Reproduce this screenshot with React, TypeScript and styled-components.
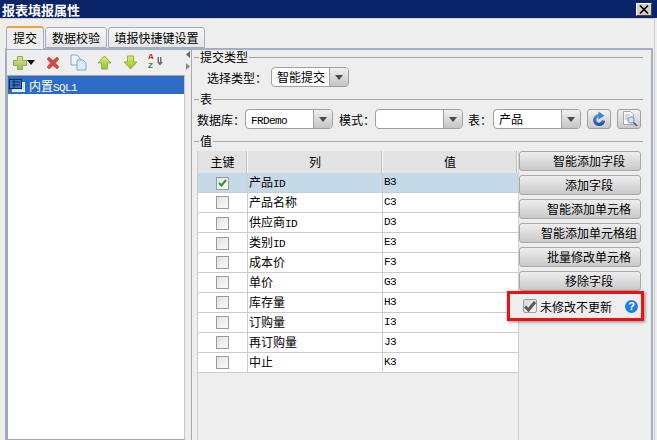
import styled, { createGlobalStyle } from 'styled-components';

const GlobalStyle = createGlobalStyle`
  html, body {
    margin: 0;
    padding: 0;
    background: #eeeeee;
  }
  * {
    box-sizing: border-box;
  }
`;

const Dialog = styled.div`
  position: relative;
  width: 657px;
  height: 440px;
  overflow: hidden;
  background: #eeeeee;
  color: #000;
  font-family: "Noto Sans CJK SC", "Liberation Sans", sans-serif;
  font-size: 12px;
  display: flex;
  flex-direction: column;
`;
const TitleBar = styled.div`
  height: 18px;
  flex: none;
  background: #0a246a;
  color: #fff;
  font-weight: 700;
  font-size: 13px;
  line-height: 17px;
  padding: 0 5px 0 2px;
  display: flex;
  align-items: center;
  justify-content: space-between;
`;
const CloseButton = styled.div`
  width: 16px;
  height: 13px;
  background: #d4d0c8;
  border: 1px solid;
  border-color: #fff #404040 #404040 #fff;
  display: flex;
  align-items: center;
  justify-content: center;
`;
const Body = styled.div`
  flex: 1;
  min-height: 0;
  width: 655px;
  border-top: 1px solid #d4d0c8;
  border-right: 1px solid #d4d0c8;
  display: flex;
  flex-direction: column;
`;
const Tabs = styled.div`
  height: 29px;
  flex: none;
  padding: 6px 0 0 6px;
  display: flex;
  align-items: flex-end;
  gap: 1px;
`;
const Tab = styled.div<{ $active?: boolean; $w: number }>`
  width: ${(p) => p.$w}px;
  height: ${(p) => (p.$active ? 23 : 21)}px;
  margin-bottom: ${(p) => (p.$active ? -1 : 0)}px;
  position: relative;
  z-index: ${(p) => (p.$active ? 1 : 0)};
  background: ${(p) => (p.$active ? '#eeeeee' : 'linear-gradient(#f6f6f6, #e6e6e6)')};
  border: 1px solid #a0afc3;
  border-bottom: ${(p) => (p.$active ? 'none' : '1px solid #a0afc3')};
  border-top: ${(p) => (p.$active ? '2px solid #e8a33d' : '1px solid #a0afc3')};
  border-radius: 3px 3px 0 0;
  text-align: center;
  line-height: 20px;
  white-space: nowrap;
`;
const Panel = styled.div`
  flex: 1;
  min-height: 0;
  margin: 0 1px 0 5px;
  border: 2px solid #a0afc3;
  border-bottom: none;
  display: flex;
`;
const LeftPane = styled.div`
  width: 178px;
  flex: none;
  display: flex;
  flex-direction: column;
`;
const Toolbar = styled.div`
  height: 25px;
  flex: none;
  display: flex;
  align-items: center;
  padding: 0 0 0 6px;
`;
const ToolIcon = styled.svg<{ $gap?: number }>`
  display: block;
  flex: none;
  margin-right: ${(p) => p.$gap ?? 0}px;
`;
const SortIcon = styled(ToolIcon)`
  margin-bottom: 3px;
`;
const TreeList = styled.div`
  flex: 1;
  background: #fff;
  border: 1px solid #a5a5a0;
  border-right-color: #c8c8c0;
`;
const TreeRow = styled.div`
  height: 18px;
  background: #2d6cc6;
  color: #fff;
  display: flex;
  align-items: center;
  gap: 4px;
  padding-left: 1px;
`;
const LatinText = styled.span`
  font-family: "Liberation Mono", monospace;
  font-size: 11px;
  letter-spacing: -0.6px;
`;
const Splitter = styled.div`
  width: 7px;
  flex: none;
  border-right: 1px solid #a8a8a8;
  display: flex;
  flex-direction: column;
  align-items: center;
  gap: 5px;
  padding-top: 1px;
`;
const SplitArrow = styled.svg`
  display: block;
`;
const RightPane = styled.div`
  flex: 1;
  min-width: 0;
  display: flex;
  flex-direction: column;
  padding: 0 8px 0 2px;
`;
const Legend = styled.div<{ $mt?: number }>`
  height: 14px;
  margin-top: ${(p) => p.$mt ?? 0}px;
  flex: none;
  display: flex;
  align-items: center;
  gap: 1px;
  line-height: 14px;
  &::before {
    content: "";
    width: 5px;
    height: 1px;
    background: #a8a8a0;
  }
  &::after {
    content: "";
    flex: 1;
    height: 1px;
    background: #a8a8a0;
  }
`;
const FormRow = styled.div<{ $mt?: number; $pl?: number }>`
  height: 20px;
  flex: none;
  margin-top: ${(p) => p.$mt ?? 0}px;
  padding-left: ${(p) => p.$pl ?? 0}px;
  display: flex;
  align-items: center;
`;
const FormLabel = styled.span<{ $w: number; $pl?: number }>`
  width: ${(p) => p.$w}px;
  padding-left: ${(p) => p.$pl ?? 0}px;
  flex: none;
  white-space: nowrap;
`;
const Combo = styled.div<{ $w: number }>`
  width: ${(p) => p.$w}px;
  height: 20px;
  flex: none;
  display: flex;
  border: 1px solid #a0a0a0;
  border-radius: 4px;
  overflow: hidden;
  background: #fff;
`;
const ComboText = styled.div`
  flex: 1;
  min-width: 0;
  padding-left: 5px;
  line-height: 18px;
  white-space: nowrap;
  overflow: hidden;
`;
const ComboArrow = styled.div`
  width: 19px;
  flex: none;
  border-left: 1px solid #a0a0a0;
  background: linear-gradient(#f0f0f0, #c4c4c4);
  display: flex;
  align-items: center;
  justify-content: center;
  &::before {
    content: "";
    border-left: 4px solid transparent;
    border-right: 4px solid transparent;
    border-top: 5px solid #4a4a4a;
  }
`;
const IconButton = styled.div<{ $ml: number }>`
  width: 24px;
  height: 20px;
  flex: none;
  margin-left: ${(p) => p.$ml}px;
  border: 1px solid #a0a0a0;
  border-radius: 3px;
  background: linear-gradient(#f2f2f2, #c8c8c8);
  display: flex;
  align-items: center;
  justify-content: center;
`;
const ValueArea = styled.div`
  flex: 1;
  min-height: 0;
  margin-top: 3px;
  display: flex;
`;
const TableBox = styled.div`
  width: 322px;
  flex: none;
  margin-left: 3px;
  border: solid #cfcfcf;
  border-width: 0 1px 0 1px;
`;
const HeaderRow = styled.div`
  height: 22px;
  display: grid;
  grid-template-columns: 50px 135px 1fr;
  background: #e3e3e3;
`;
const HeaderCell = styled.div`
  display: flex;
  align-items: center;
  justify-content: center;
  line-height: 20px;
  border-right: 1px solid #f8f8f8;
  box-shadow: inset -1px 0 0 #c0c0c0;
`;
const DataRow = styled.div<{ $selected?: boolean }>`
  height: 20px;
  display: grid;
  grid-template-columns: 50px 135px 1fr;
  background: ${(p) => (p.$selected ? '#c6d9e8' : '#fff')};
  border-bottom: 1px solid #cccccc;
`;
const CheckCell = styled.div`
  display: flex;
  align-items: center;
  justify-content: center;
  border-right: 1px solid #cccccc;
`;
const Checkbox = styled.div`
  width: 13px;
  height: 13px;
  border: 1px solid #9a9a9a;
  background: linear-gradient(135deg, #e2e2e2, #fbfbfb);
  display: flex;
  align-items: center;
  justify-content: center;
`;
const NameCell = styled.div`
  padding-left: 1px;
  line-height: 18px;
  border-right: 1px solid #cccccc;
  white-space: nowrap;
`;
const CodeCell = styled.div`
  padding-left: 1px;
  font-family: "Liberation Mono", monospace;
  font-size: 11px;
  letter-spacing: -0.6px;
  line-height: 19px;
`;
const ActionColumn = styled.div`
  width: 122px;
  flex: none;
  display: flex;
  flex-direction: column;
  gap: 4px;
`;
const ActionButton = styled.div`
  height: 20px;
  flex: none;
  border: 1px solid #a8a8a8;
  border-radius: 3px;
  background: linear-gradient(#eeeeee, #c9c9c9);
  text-align: center;
  line-height: 18px;
  padding-left: 18px;
  white-space: nowrap;
`;
const Annotation = styled.div`
  position: absolute;
  left: 507px;
  top: 291px;
  width: 137px;
  height: 30px;
  border: 3px solid #ee1111;
  box-shadow: 1px 1px 3px rgba(0, 0, 0, 0.45);
  background: #eeeeee;
  display: flex;
  align-items: center;
  padding-left: 13px;
`;
const BigCheck = styled.div`
  width: 14px;
  height: 14px;
  flex: none;
  border: 1px solid #a0a0a0;
  border-radius: 2px;
  background: linear-gradient(135deg, #d8d8d8, #f4f4f4);
  display: flex;
  align-items: center;
  justify-content: center;
`;
const AnnotationText = styled.span`
  margin-left: 3px;
  white-space: nowrap;
`;
const HelpBadge = styled.div`
  width: 13px;
  height: 13px;
  margin-left: 13px;
  flex: none;
  border-radius: 50%;
  background: #1a7fe0;
  color: #fff;
  font-family: "Liberation Sans", sans-serif;
  font-size: 11px;
  font-weight: 700;
  line-height: 13px;
  text-align: center;
`;

const rows = [
  ['产品', 'ID', 'B3'],
  ['产品名称', '', 'C3'],
  ['供应商', 'ID', 'D3'],
  ['类别', 'ID', 'E3'],
  ['成本价', '', 'F3'],
  ['单价', '', 'G3'],
  ['库存量', '', 'H3'],
  ['订购量', '', 'I3'],
  ['再订购量', '', 'J3'],
  ['中止', '', 'K3'],
];

const actions = ['智能添加字段', '添加字段', '智能添加单元格', '智能添加单元格组', '批量修改单元格', '移除字段'];

const App = () => {
  return (
    <Dialog>
      <GlobalStyle />
      <TitleBar>
        报表填报属性
        <CloseButton>
          <svg width="10" height="9" viewBox="0 0 10 9">
            <path d="M1 0.5 L9 8.5 M9 0.5 L1 8.5" stroke="#000" strokeWidth="1.6" />
          </svg>
        </CloseButton>
      </TitleBar>
      <Body>
        <Tabs>
          <Tab $active $w={38}>提交</Tab>
          <Tab $w={62}>数据校验</Tab>
          <Tab $w={97}>填报快捷键设置</Tab>
        </Tabs>
        <Panel>
          <LeftPane>
            <Toolbar>
              <ToolIcon width="14" height="14" viewBox="0 0 14 14">
                <defs>
                  <linearGradient id="plusFill" x1="0" y1="0" x2="0" y2="1">
                    <stop offset="0" stopColor="#d8e89a" />
                    <stop offset="1" stopColor="#9cbf50" />
                  </linearGradient>
                  <linearGradient id="arrowFill" x1="0" y1="0" x2="0" y2="1">
                    <stop offset="0" stopColor="#dcef7a" />
                    <stop offset="1" stopColor="#8fc02c" />
                  </linearGradient>
                  <linearGradient id="refreshFill" x1="0" y1="0" x2="0" y2="1">
                    <stop offset="0" stopColor="#4f92dc" />
                    <stop offset="1" stopColor="#1f56a8" />
                  </linearGradient>
                </defs>
                <path d="M4.5 0.5h5v4h4v5h-4v4h-5v-4h-4v-5h4z" fill="url(#plusFill)" stroke="#8fa858" />
              </ToolIcon>
              <ToolIcon width="8" height="5" viewBox="0 0 8 5" $gap={11}>
                <path d="M0 0h8L4 5z" fill="#111" />
              </ToolIcon>
              <ToolIcon width="14" height="14" viewBox="0 0 14 14" $gap={10}>
                <path d="M1 3l2-2 4 3.5L11 1l2 2-3.5 4L13 11l-2 2-4-3.5L3 13l-2-2 3.5-4z" fill="#d8483f" stroke="#b84a44" strokeWidth="0.6" />
              </ToolIcon>
              <ToolIcon width="17" height="17" viewBox="0 0 17 17" $gap={10}>
                <path d="M1 1h6l3 3v7H1z" fill="#eef5fd" stroke="#7aa7dc" />
                <path d="M7 6h6l3 3v7H7z" fill="#dcebfb" stroke="#7aa7dc" />
              </ToolIcon>
              <ToolIcon width="15" height="15" viewBox="0 0 15 15" $gap={11}>
                <path d="M7.5 1L14 8h-3.5v6h-6V8H1z" fill="url(#arrowFill)" stroke="#93b33c" />
              </ToolIcon>
              <ToolIcon width="15" height="15" viewBox="0 0 15 15" $gap={10}>
                <path d="M7.5 14L14 7h-3.5V1h-6v6H1z" fill="url(#arrowFill)" stroke="#93b33c" />
              </ToolIcon>
              <SortIcon width="16" height="18" viewBox="0 0 16 18">
                <text x="0" y="7.3" fontSize="8" fontWeight="700" fontFamily="Liberation Sans" fill="#c8281e">A</text>
                <text x="0" y="16.2" fontSize="8" fontWeight="700" fontFamily="Liberation Sans" fill="#1f8f30">Z</text>
                <path d="M9.5 5h1.5v5h1V5h1.5v5H15l-3 3.5L9 10h.5z" fill="#6e6e6e" />
              </SortIcon>
            </Toolbar>
            <TreeList>
              <TreeRow>
                <svg width="16" height="13" viewBox="0 0 16 13">
                  <rect x="3.5" y="3.5" width="12" height="9" fill="#cfe0f5" stroke="#f2f6fc" />
                  <rect x="0.5" y="0.5" width="12" height="9" fill="#3d74c4" stroke="#10284f" />
                  <path d="M3 3h8M3 6h8M5 1v8" stroke="#10284f" strokeWidth="1" />
                </svg>
                <span>内置<LatinText>SQL1</LatinText></span>
              </TreeRow>
            </TreeList>
          </LeftPane>
          <Splitter>
            <SplitArrow width="4" height="7" viewBox="0 0 4 7"><path d="M4 0v7L0 3.5z" fill="#666" /></SplitArrow>
            <SplitArrow width="4" height="7" viewBox="0 0 4 7"><path d="M0 0v7l4-3.5z" fill="#888" /></SplitArrow>
          </Splitter>
          <RightPane>
            <Legend>提交类型</Legend>
            <FormRow $mt={3} $pl={13}>
              <FormLabel $w={64}>选择类型：</FormLabel>
              <Combo $w={78}>
                <ComboText>智能提交</ComboText>
                <ComboArrow />
              </Combo>
            </FormRow>
            <Legend $mt={5}>表</Legend>
            <FormRow $mt={3} $pl={3}>
              <FormLabel $w={48}>数据库：</FormLabel>
              <Combo $w={88}>
                <ComboText><LatinText>FRDemo</LatinText></ComboText>
                <ComboArrow />
              </Combo>
              <FormLabel $w={42} $pl={6}>模式：</FormLabel>
              <Combo $w={88}>
                <ComboText />
                <ComboArrow />
              </Combo>
              <FormLabel $w={30} $pl={5}>表：</FormLabel>
              <Combo $w={88}>
                <ComboText>产品</ComboText>
                <ComboArrow />
              </Combo>
              <IconButton $ml={6}>
                <svg width="15" height="16" viewBox="0 0 15 16">
                  <path d="M11.5 9.5A4.4 4.4 0 1 1 7 4.6" fill="none" stroke="url(#refreshFill)" strokeWidth="3.4" />
                  <path d="M6.5 0.5L12.5 4.8 6.5 8.5z" fill="#3f82d4" />
                </svg>
              </IconButton>
              <IconButton $ml={6}>
                <svg width="17" height="16" viewBox="0 0 17 16">
                  <path d="M2.5 0.5h7l3 3v10h-10z" fill="#fbfbfb" stroke="#a8a8a8" />
                  <path d="M4 4h5M4 6h3M4 8h3" stroke="#b0b0b0" />
                  <circle cx="10" cy="9" r="3.2" fill="#cfe3f5" stroke="#6f94bb" />
                  <path d="M12.5 11.5L16 15" stroke="#555" strokeWidth="1.6" />
                </svg>
              </IconButton>
            </FormRow>
            <Legend $mt={5}>值</Legend>
            <ValueArea>
              <TableBox>
                <HeaderRow>
                  <HeaderCell>主键</HeaderCell>
                  <HeaderCell>列</HeaderCell>
                  <HeaderCell>值</HeaderCell>
                </HeaderRow>
                {rows.map(([name, latin, code], i) => (
                  <DataRow key={code} $selected={i === 0}>
                    <CheckCell>
                      <Checkbox>
                        {i === 0 && (
                          <svg width="9" height="8" viewBox="0 0 9 8">
                            <path d="M1 4l2.5 2.5L8 1" fill="none" stroke="#2a9a2a" strokeWidth="2" />
                          </svg>
                        )}
                      </Checkbox>
                    </CheckCell>
                    <NameCell>{name}{latin && <LatinText>{latin}</LatinText>}</NameCell>
                    <CodeCell>{code}</CodeCell>
                  </DataRow>
                ))}
              </TableBox>
              <ActionColumn>
                {actions.map((label) => (
                  <ActionButton key={label}>{label}</ActionButton>
                ))}
              </ActionColumn>
            </ValueArea>
          </RightPane>
        </Panel>
      </Body>
      <Annotation>
        <BigCheck>
          <svg width="12" height="11" viewBox="0 0 12 11">
            <path d="M1 5.5l3.5 3.5L11 1" fill="none" stroke="#5a5a5a" strokeWidth="3" />
          </svg>
        </BigCheck>
        <AnnotationText>未修改不更新</AnnotationText>
        <HelpBadge>?</HelpBadge>
      </Annotation>
    </Dialog>
  );
};

export default App;
